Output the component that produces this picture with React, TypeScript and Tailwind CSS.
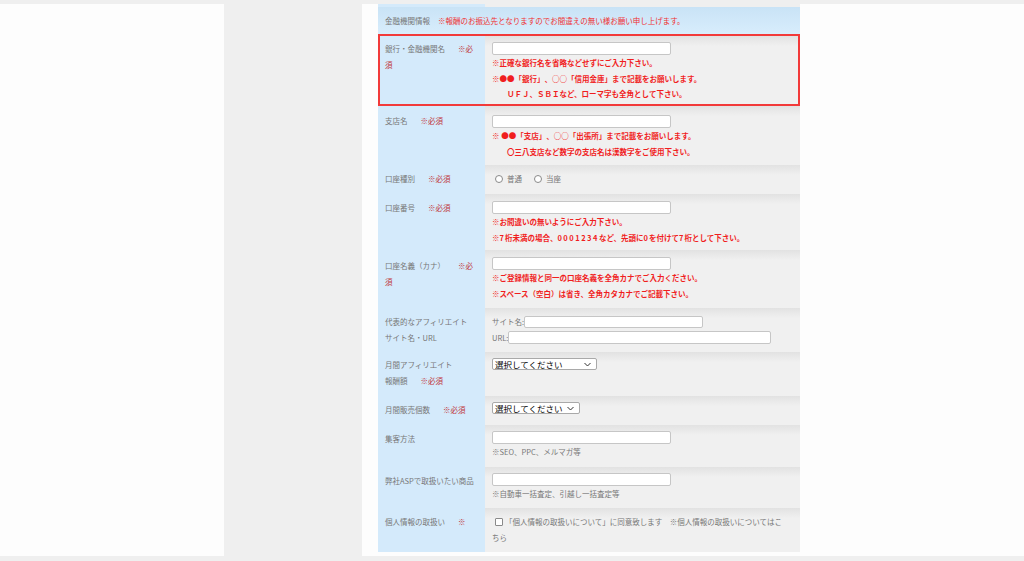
import React from 'react';

function Req({ text = '※必須' }: { text?: string }) {
  return <span className="ml-[13px] text-[#c0353a]">{text}</span>;
}

function TextBox({ w = 'w-[179px]' }: { w?: string }) {
  return <div className={`${w} h-[13px] bg-white border border-[#c6c6c6] rounded-[2px]`} />;
}

function Note({ children }: { children: React.ReactNode }) {
  return <p className="text-[#f01e1e] font-bold">{children}</p>;
}

function SelectBox({ w }: { w: string }) {
  return (
    <div className={`${w} h-[12px] bg-white border border-[#a9a9a9] rounded-[2px] flex items-center justify-between pl-[2px] pr-[5px] text-[8.5px] leading-none text-black`}>
      <span>選択してください</span>
      <svg width="7" height="5" viewBox="0 0 7 5" fill="none" stroke="#333" strokeWidth="1">
        <path d="M0.5 1 L3.5 4 L6.5 1" />
      </svg>
    </div>
  );
}

function Row({
  label,
  children,
  h,
  lpt = 'pt-[6px]',
  vpt = 'pt-[6px]',
}: {
  label: React.ReactNode;
  children?: React.ReactNode;
  h: string;
  lpt?: string;
  vpt?: string;
}) {
  return (
    <div className={`flex ${h}`}>
      <div className={`w-[107px] shrink-0 bg-[#d4eafb] pl-[7px] pr-[10px] ${lpt} text-[#777]`}>{label}</div>
      <div className={`flex-1 bg-[linear-gradient(#e2e2e2,#f0f0f0_10px)] pl-[7px] ${vpt}`}>{children}</div>
    </div>
  );
}

export default function App() {
  return (
    <div className="w-[1024px] h-[561px] bg-[#efefef] pt-[4px] font-['Noto_Sans_CJK_JP','Liberation_Sans',sans-serif] text-[7.5px] leading-[15.5px] [text-spacing-trim:space-all] overflow-hidden">
      <div className="flex h-[552px]">
        <div className="w-[224px] bg-[#fdfdfd]" />
        <div className="w-[138px] bg-[#efefef]" />
        <div className="flex-1 bg-[#fdfdfd] pl-[16px]">
          <div className="w-[422px]">
            {/* tail of previous row */}
            <div className="flex h-[3px]">
              <div className="w-[107px] bg-[#d4eafb]" />
              <div className="flex-1 bg-[#efefef]" />
            </div>

            <div className="h-[27px] bg-[linear-gradient(#c9e3f6,#d8edfc)] flex items-center pl-[7px]">
              <span className="text-[#777]">金融機関情報</span>
              <span className="ml-[8px] text-[#f03030]">※報酬のお振込先となりますのでお間違えの無い様お願い申し上げます。</span>
            </div>

            <div className="border-2 border-[#f23a3a]">
              <div className="flex h-[68px]">
                <div className="w-[105px] shrink-0 bg-[#d4eafb] pl-[5px] pr-[8px] pt-[5px] text-[#777]">
                  銀行・金融機関名<Req />
                </div>
                <div className="flex-1 bg-[linear-gradient(#e2e2e2,#f0f0f0_10px)] pl-[7px] pt-[6px]">
                  <TextBox />
                  <Note>※正確な銀行名を省略などせずにご入力下さい。</Note>
                  <Note>※●●「銀行」、○○「信用金庫」まで記載をお願いします。</Note>
                  <Note>
                    <span className="pl-[15px]">ＵＦＪ、ＳＢＩなど、ローマ字も全角として下さい。</span>
                  </Note>
                </div>
              </div>
            </div>

            <Row h="h-[59px]" lpt="pt-[7px]" vpt="pt-[9px]" label={<>支店名<Req /></>}>
              <TextBox />
              <Note>※ ●●「支店」、○○「出張所」まで記載をお願いします。</Note>
              <Note>
                <span className="pl-[15px]">〇三八支店など数字の支店名は漢数字をご使用下さい。</span>
              </Note>
            </Row>

            <Row h="h-[29px]" label={<>口座種別<Req /></>}>
              <div className="flex items-center text-[#777] pl-[3px]">
                <span className="w-[8px] h-[8px] rounded-full border border-[#8a8a8a] bg-white" />
                <span className="ml-[4px]">普通</span>
                <span className="ml-[12px] w-[8px] h-[8px] rounded-full border border-[#8a8a8a] bg-white" />
                <span className="ml-[4px]">当座</span>
              </div>
            </Row>

            <Row h="h-[56px]" vpt="pt-[7px]" label={<>口座番号<Req /></>}>
              <TextBox />
              <Note>※お間違いの無いようにご入力下さい。</Note>
              <Note>
                ※<span className="tracking-[1px]">7</span>桁未満の場合、<span className="tracking-[1.5px]">0001234</span>など、先頭に
                <span className="tracking-[1px]">0</span>を付けて<span className="tracking-[1px]">7</span>桁として下さい。
              </Note>
            </Row>

            <Row h="h-[58px]" lpt="pt-[8px]" vpt="pt-[7px]" label={<>口座名義（カナ）<Req /></>}>
              <TextBox />
              <Note>※ご登録情報と同一の口座名義を全角カナでご入力ください。</Note>
              <Note>※スペース（空白）は省き、全角カタカナでご記載下さい。</Note>
            </Row>

            <Row
              h="h-[44px]"
              vpt="pt-[8px]"
              label={
                <>
                  代表的なアフィリエイト
                  <br />
                  サイト名・URL
                </>
              }
            >
              <div className="flex items-center h-[12px] text-[#777]">
                <span>サイト名:</span>
                <div className="w-[179px] h-[12px] bg-white border border-[#c6c6c6] rounded-[2px]" />
              </div>
              <div className="flex items-center h-[13px] mt-[3px] text-[#777]">
                <span>URL:</span>
                <div className="w-[263px] h-[13px] bg-white border border-[#c6c6c6] rounded-[2px]" />
              </div>
            </Row>

            <Row
              h="h-[44px]"
              lpt="pt-[5px]"
              label={
                <>
                  月間アフィリエイト
                  <br />
                  報酬額<Req />
                </>
              }
            >
              <SelectBox w="w-[105px]" />
            </Row>

            <Row h="h-[29px]" label={<>月間販売個数<Req /></>}>
              <SelectBox w="w-[88px]" />
            </Row>

            <Row h="h-[42px]" label="集客方法">
              <TextBox />
              <p className="text-[#777]">※SEO、PPC、メルマガ等</p>
            </Row>

            <Row h="h-[41px]" label="弊社ASPで取扱いたい商品">
              <TextBox />
              <p className="text-[#777]">※自動車一括査定、引越し一括査定等</p>
            </Row>

            <Row h="h-[44px]" label={<>個人情報の取扱い<Req text="※" /></>}>
              <p className="text-[#777] pr-[14px]">
                <span className="inline-block align-[-1px] ml-[3px] mr-[2px] w-[8px] h-[8px] border border-[#8a8a8a] rounded-[1px] bg-white" />
                「個人情報の取扱いについて」に同意致します　※個人情報の取扱いについてはこちら
              </p>
            </Row>
          </div>
        </div>
      </div>
    </div>
  );
}
